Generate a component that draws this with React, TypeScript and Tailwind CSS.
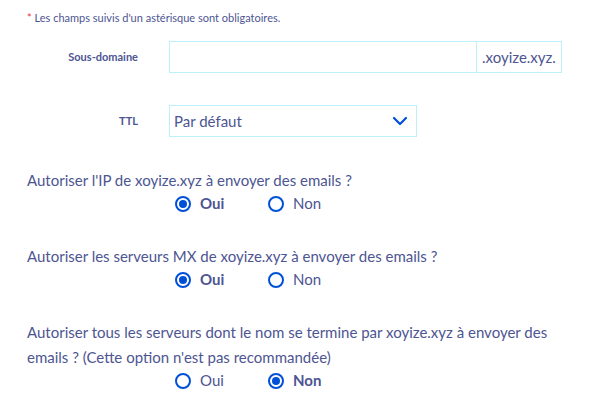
import React from 'react';

const FONT = "font-['Lato','Open_Sans',sans-serif]";

function Radio({ label, checked }: { label: string; checked: boolean }) {
  return (
    <label className="flex w-[93px] items-center gap-[9px]">
      <span className="flex h-4 w-4 items-center justify-center rounded-full border-2 border-[#0050d7] bg-white">
        {checked && <span className="h-2 w-2 rounded-full bg-[#0050d7]" />}
      </span>
      <span className={checked ? 'font-bold text-[#4d5592]' : 'text-[#4d5592]'}>{label}</span>
    </label>
  );
}

function Question({ text, yes }: { text: React.ReactNode; yes: boolean }) {
  return (
    <div className="pr-[20px]">
      <p className="text-[15px] leading-[25px] text-[#4d5592]">{text}</p>
      <div className="mt-[-2px] flex h-[25px] items-center pl-[148px] text-[15px]">
        <Radio label="Oui" checked={yes} />
        <Radio label="Non" checked={!yes} />
      </div>
    </div>
  );
}

export default function App() {
  return (
    <div className={`${FONT} min-h-screen bg-white pl-[27px] text-[#4d5592]`}>
      <p className="pt-[10px] text-[11px] leading-[16px]">
        <span className="text-[#e53935]">*</span> Les champs suivis d'un astérisque sont obligatoires.
      </p>

      <div className="mt-[15px] flex items-center">
        <span className="w-[111px] text-right text-[11px] font-bold">Sous-domaine</span>
        <div className="ml-[31px] flex h-[32px]">
          <input className="h-full w-[308px] border border-[#bdf0fa] outline-none" />
          <span className="flex h-full items-center border border-l-0 border-[#bdf0fa] px-[5px] text-[15px]">
            .xoyize.xyz.
          </span>
        </div>
      </div>

      <div className="mt-[32px] flex items-center">
        <span className="w-[111px] text-right text-[11px] font-bold">TTL</span>
        <div className="ml-[31px] flex h-[32px] w-[248px] items-center justify-between border border-[#bdf0fa] pl-[4px] pr-[8px]">
          <span className="text-[15px]">Par défaut</span>
          <svg width="16" height="10" viewBox="0 0 16 10" fill="none">
            <path d="M2 2l6 6 6-6" stroke="#0050d7" strokeWidth="2.2" strokeLinecap="round" strokeLinejoin="round" />
          </svg>
        </div>
      </div>

      <div className="mt-[31px] flex flex-col gap-[28px]">
        <Question text="Autoriser l'IP de xoyize.xyz à envoyer des emails ?" yes />
        <Question text="Autoriser les serveurs MX de xoyize.xyz à envoyer des emails ?" yes />
        <Question
          text="Autoriser tous les serveurs dont le nom se termine par xoyize.xyz à envoyer des emails ? (Cette option n'est pas recommandée)"
          yes={false}
        />
      </div>
    </div>
  );
}
